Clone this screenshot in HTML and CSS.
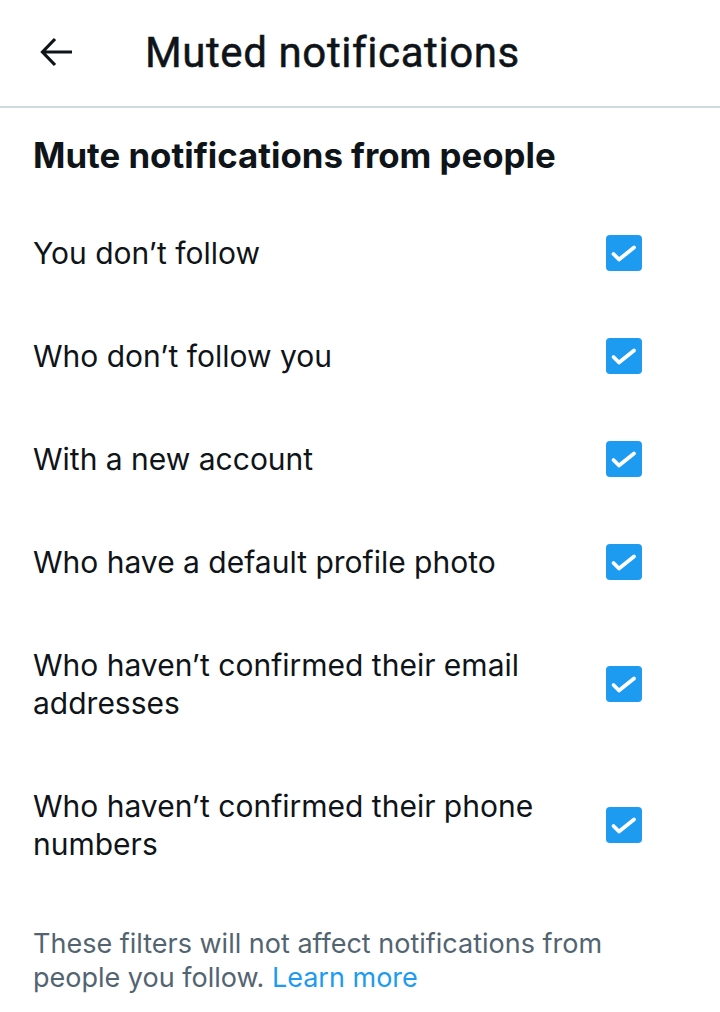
FILE: index.html
```html
<!DOCTYPE html>
<html lang="en">
<head>
<meta charset="utf-8">
<link rel="stylesheet" href="styles.css">
</head>
<body>
<header class="topbar">
  <button class="back" aria-label="Back">
    <svg viewBox="0 0 34 30" width="34" height="30"><path d="M32 15H3M15 2L2.5 15L15 28" fill="none" stroke="#0f1419" stroke-width="3.2" stroke-linejoin="miter"/></svg>
  </button>
  <h1 class="title">Muted notifications</h1>
</header>
<main class="content">
  <h2 class="section">Mute notifications from people</h2>
  <ul class="list">
    <li class="row"><span class="label">You don’t follow</span><span class="check"></span></li>
    <li class="row"><span class="label">Who don’t follow you</span><span class="check"></span></li>
    <li class="row"><span class="label">With a new account</span><span class="check"></span></li>
    <li class="row"><span class="label">Who have a default profile photo</span><span class="check"></span></li>
    <li class="row"><span class="label">Who haven’t confirmed their email addresses</span><span class="check"></span></li>
    <li class="row"><span class="label">Who haven’t confirmed their phone numbers</span><span class="check"></span></li>
  </ul>
  <p class="note">These filters will not affect notifications from people you follow. <a href="#">Learn more</a></p>
</main>
</body>
</html>
```
FILE: styles.css
```css
* { box-sizing: border-box; }
html, body { margin: 0; padding: 0; background: #fff; }
body { font-family: "Inter", "Liberation Sans", sans-serif; color: #0f1419; width: 720px; }
.topbar {
  height: 108px;
  display: flex;
  align-items: center;
  border-bottom: 2px solid #cfd9de;
  padding-left: 40px;
  padding-bottom: 2px;
}
.back { border: 0; background: none; padding: 0; width: 34px; height: 30px; display: flex; }
.back svg { display: block; }
.title {
  margin: 0 0 0 71px;
  font-family: "Roboto", sans-serif;
  font-weight: 400;
  font-size: 42px;
  letter-spacing: 0.6px;
  color: #0f1419;
  -webkit-text-stroke: 0.5px #0f1419;
}
.content { padding: 0 33px; }
.section {
  margin: 0;
  padding-top: 27px;
  font-size: 34.8px;
  line-height: 40px;
  font-weight: 700;
  height: 93px;
}
.list { list-style: none; margin: 0; padding: 0; }
.row {
  display: flex;
  align-items: center;
  justify-content: space-between;
  gap: 40px;
  padding: 32.5px 45px 32.5px 0;
  font-size: 30px;
  line-height: 38px;
}
.label { flex: 1; }
.check {
  width: 36px; height: 36px;
  border-radius: 4px;
  background: #1d9bf0 url("data:image/svg+xml,%3Csvg xmlns='http://www.w3.org/2000/svg' viewBox='0 0 36 36'%3E%3Cpath d='M7.5 19L13 24.5L28 12.5' fill='none' stroke='white' stroke-width='3.8' stroke-linecap='round' stroke-linejoin='round'/%3E%3C/svg%3E") center/36px 36px no-repeat;
  flex: none;
}
.note {
  margin: 32px 0 0;
  max-width: 600px;
  font-size: 27px;
  line-height: 34px;
  color: #536471;
}
.note a { color: #1d9bf0; text-decoration: none; }
```
